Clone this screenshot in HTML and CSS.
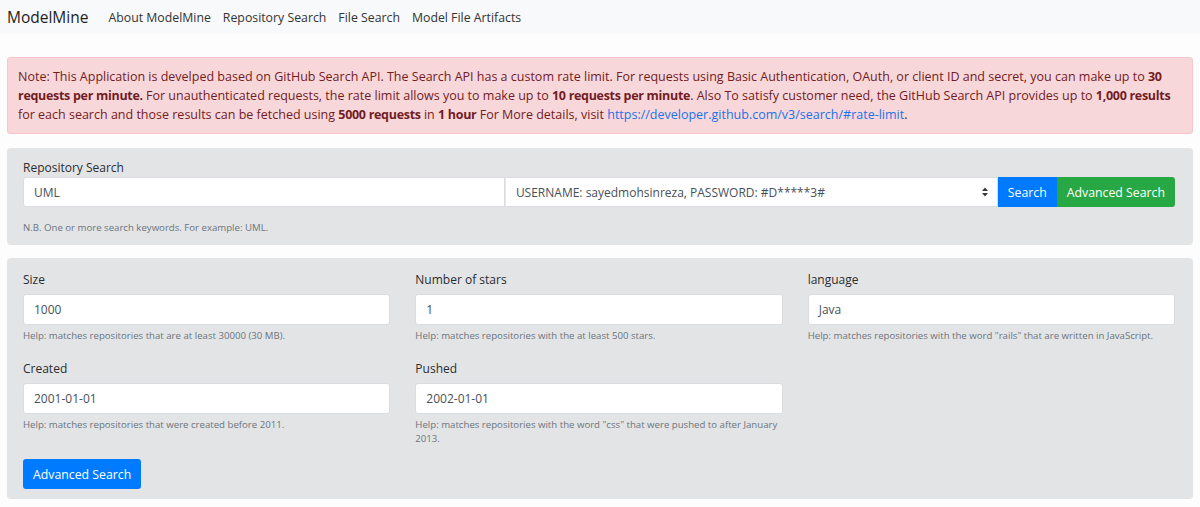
FILE: index.html
```html
<!DOCTYPE html>
<html lang="en">
<head>
<meta charset="utf-8">
<title>ModelMine</title>
<link rel="stylesheet" href="styles.css">
</head>
<body>
<nav class="navbar">
  <a class="brand" href="#">ModelMine</a>
  <a class="nav-link" href="#">About ModelMine</a>
  <a class="nav-link" href="#">Repository Search</a>
  <a class="nav-link" href="#">File Search</a>
  <a class="nav-link" href="#">Model File Artifacts</a>
</nav>
<main class="page">
  <div class="alert">
    Note: This Application is develped based on GitHub Search API. The Search API has a custom rate limit. For requests using Basic Authentication, OAuth, or client ID and secret, you can make up to <b>30 requests per minute.</b> For unauthenticated requests, the rate limit allows you to make up to <b>10 requests per minute</b>. Also To satisfy customer need, the GitHub Search API provides up to <b>1,000 results</b> for each search and those results can be fetched using <b>5000 requests</b> in <b>1 hour</b> For More details, visit <a class="alert-link" href="#">https://developer.github.com/v3/search/#rate-limit</a>.
  </div>

  <section class="jumbo jumbo-search">
    <label class="label">Repository Search</label>
    <div class="search-row">
      <div class="input input-first">UML</div>
      <div class="select">
        <span>USERNAME: sayedmohsinreza, PASSWORD: #D*****3#</span>
        <svg class="select-arrow" width="8" height="10" viewBox="0 0 8 10"><path d="M4 0.5 L7 4 H1 Z M4 9.5 L7 6 H1 Z" fill="#343a40"/></svg>
      </div>
      <button class="btn btn-blue btn-flat">Search</button>
      <button class="btn btn-green btn-last">Advanced Search</button>
    </div>
    <div class="help help-search">N.B. One or more search keywords. For example: UML.</div>
  </section>

  <section class="jumbo jumbo-adv">
    <div class="grid">
      <div class="field">
        <label class="label label-field">Size</label>
        <div class="input">1000</div>
        <div class="help">Help: matches repositories that are at least 30000 (30 MB).</div>
      </div>
      <div class="field">
        <label class="label label-field">Number of stars</label>
        <div class="input">1</div>
        <div class="help">Help: matches repositories with the at least 500 stars.</div>
      </div>
      <div class="field">
        <label class="label label-field">language</label>
        <div class="input">Java</div>
        <div class="help">Help: matches repositories with the word "rails" that are written in JavaScript.</div>
      </div>
      <div class="field">
        <label class="label label-field">Created</label>
        <div class="input">2001-01-01</div>
        <div class="help">Help: matches repositories that were created before 2011.</div>
      </div>
      <div class="field">
        <label class="label label-field">Pushed</label>
        <div class="input">2002-01-01</div>
        <div class="help">Help: matches repositories with the word "css" that were pushed to after January 2013.</div>
      </div>
    </div>
    <button class="btn btn-blue btn-round">Advanced Search</button>
  </section>
</main>
</body>
</html>
```

FILE: styles.css
```css
* { box-sizing: border-box; }

body {
  margin: 0;
  background: #fdfdfd;
  font-family: "Open Sans", "Liberation Sans", sans-serif;
  font-size: 12px;
  color: #212529;
}

.navbar {
  display: flex;
  align-items: center;
  height: 34px;
  padding: 0 7px;
  background: #f8f9fa;
  gap: 12px;
}

.brand {
  font-size: 15.5px;
  color: #222;
  text-decoration: none;
  margin-right: 8px;
}

.nav-link {
  font-size: 12.3px;
  color: #333;
  text-decoration: none;
}

.page {
  padding: 23px 7px 8px;
}

.alert {
  background: #f8d7da;
  border: 1px solid #f5c6cb;
  border-radius: 3px;
  color: #721c24;
  padding: 9px 10px;
  font-size: 12.5px;
  line-height: 19px;
}

.alert b {
  font-weight: 700;
  letter-spacing: -0.3px;
}

.alert-link {
  color: #1a73e8;
  text-decoration: none;
}

.jumbo {
  background: #e3e4e6;
  border-radius: 4px;
  margin-top: 14px;
}

.jumbo-search { padding: 10px 18px 10px 16px; }
.jumbo-adv { padding: 12px 18px 10px 16px; margin-top: 13px; }

.label {
  display: block;
  line-height: 19px;
  color: #2a2d31;
}

.label-field { margin-bottom: 5px; }

.search-row {
  display: grid;
  grid-template-columns: 482fr 493fr auto auto;
  height: 30px;
}

.input {
  height: 31px;
  background: #fff;
  border: 1px solid #dadcdf;
  border-radius: 3px;
  padding: 0 10px;
  display: flex;
  align-items: center;
  color: #495057;
}

.search-row .input { height: 30px; }

.input-first { border-radius: 3px 0 0 3px; }

.select {
  height: 30px;
  background: #fff;
  border: 1px solid #dadcdf;
  border-left-color: #e6e7e9;
  display: flex;
  align-items: center;
  justify-content: space-between;
  padding: 0 8px 0 10px;
  color: #495057;
}

.btn {
  border: none;
  color: #fff;
  font-family: inherit;
  font-size: 12.3px;
  height: 30px;
  padding: 0 10px;
  cursor: pointer;
}

.btn-blue { background: #007bff; }
.btn-green { background: #28a745; }
.btn-flat { border-radius: 0; }
.btn-last { border-radius: 0 3px 3px 0; }
.btn-round { border-radius: 3px; }

.help {
  font-size: 9.65px;
  line-height: 14px;
  color: #6c757d;
  margin-top: 4px;
}

.help-search { margin-top: 13px; line-height: 15px; }

.grid {
  display: grid;
  grid-template-columns: repeat(3, 1fr);
  column-gap: 25px;
  row-gap: 16px;
  margin-bottom: 13px;
}
```
